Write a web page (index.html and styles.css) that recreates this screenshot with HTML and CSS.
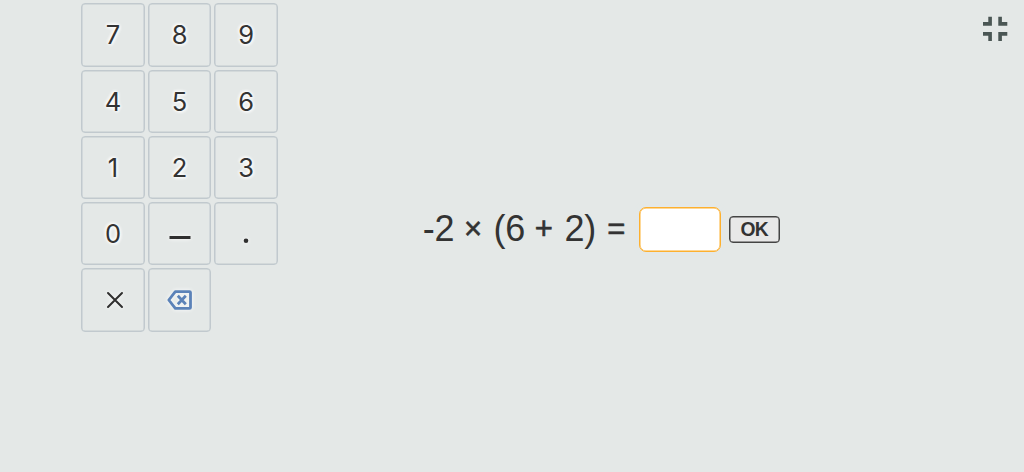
FILE: index.html
```html
<!DOCTYPE html>
<html lang="en">
<head>
    <title>Arithmetic</title>
    <meta charset="utf-8">
    <link rel="stylesheet" href="styles.css">
</head>
<body>
    <div class="page">
        <div class="keypad">
            <button class="key">7</button>
            <button class="key">8</button>
            <button class="key">9</button>
            <button class="key">4</button>
            <button class="key">5</button>
            <button class="key">6</button>
            <button class="key">1</button>
            <button class="key">2</button>
            <button class="key">3</button>
            <button class="key">0</button>
            <button class="key" aria-label="Minus">
                <svg class="minus" viewBox="0 0 22 22"><path d="M.5 14.5h21"/></svg>
            </button>
            <button class="key" aria-label="Decimal point">
                <svg class="dot" viewBox="0 0 22 22"><circle cx="11" cy="17.7" r="2.3"/></svg>
            </button>
            <button class="key" aria-label="Times">
                <svg class="times" viewBox="0 0 18 18"><path d="M2 2l14 14M16 2L2 16"/></svg>
            </button>
            <button class="key" aria-label="Delete">
                <svg class="erase" viewBox="0 0 26 20"><path d="M8.3 1.6h14.2q1 0 1 1v14.8q0 1-1 1H8.3L1.8 10z"/><path d="M10.8 5.8l8 8.4M18.8 5.8l-8 8.4"/></svg>
            </button>
        </div>

        <div class="question">
            <span class="equation">-2 <span class="operator">×</span> (6 <span class="operator">+</span> 2) <span class="operator equals">=</span></span>
            <input class="answer" type="text" aria-label="Answer">
            <button class="ok-button">OK</button>
        </div>

        <button class="fullscreen-button" aria-label="Exit full screen">
            <svg viewBox="0 0 26 26"><path d="M1 7.9h7.1V.8M18.1.8v7.1h7.2M1 17.9h7.1V25M18.1 25v-7.1h7.2"/></svg>
        </button>
    </div>
</body>
</html>
```

FILE: styles.css
```css
html, body {
    height: 100%;
    margin: 0;
    padding: 0;
    overflow: hidden;
}

body {
    background: #e4e8e7;
    color: #333;
    font-family: "Liberation Sans", Arial, sans-serif;
}

button, input {
    box-sizing: border-box;
    margin: 0;
    padding: 0;
    color: inherit;
    font-family: inherit;
}

.page {
    display: flex;
    align-items: flex-start;
    height: 100%;
}

.keypad {
    display: grid;
    grid-template-columns: repeat(3, 63.5px);
    grid-auto-rows: 63.3px;
    gap: 3px;
    margin: 3.3px 0 0 81.3px;
}

.key {
    display: flex;
    align-items: center;
    justify-content: center;
    border: 1px solid #c1c9ce;
    border-radius: 4px;
    background: #e4e8e7;
    box-shadow: inset 0 0 0 .5px #c1c9ce;
    font-family: Inter, sans-serif;
    font-size: 25.5px;
    text-shadow: 1px 1px 3px #fff, -1px -1px 3px #fff, 0 0 4px #fff;
}

.key svg {
    fill: none;
    stroke: #2f2f2f;
    filter: drop-shadow(0 0 2px #fff);
}

.key .minus {
    width: 22px;
    height: 22px;
    stroke-width: 3;
}

.key .dot {
    width: 22px;
    height: 22px;
    fill: #2f2f2f;
    stroke: none;
}

.key .times {
    width: 18px;
    height: 18px;
    margin-left: 3px;
    stroke-width: 2;
    stroke-linecap: round;
}

.key .erase {
    width: 26px;
    height: 20px;
    margin-left: 1px;
    stroke: #5b82b8;
    stroke-width: 2.8;
    stroke-linejoin: round;
}

.question {
    display: flex;
    align-items: center;
    height: 44px;
    margin: 207px 0 0 145px;
}

.equation {
    width: 216px;
    font-size: 36px;
    line-height: 44px;
    letter-spacing: -.3px;
    white-space: pre;
}

.operator {
    -webkit-text-stroke: .6px #333;
    display: inline-block;
    width: 20px;
    font-size: 31px;
    line-height: 1;
    vertical-align: 2px;
}

.equals {
    margin-left: 1.6px;
}

.answer {
    width: 82px;
    height: 45px;
    border: 1px solid #fdb02f;
    border-radius: 7px;
    outline: none;
    background: #fff;
    font-size: 32px;
    text-align: center;
    box-shadow: inset 0 0 0 .5px #fdb02f, 0 0 7px #e2e8ea;
}

.ok-button {
    width: 51px;
    height: 27px;
    margin-left: 8px;
    padding-top: 1px;
    border: 1px solid #444;
    border-radius: 4px;
    background: #e8e8e8;
    box-shadow: inset 0 0 0 .5px #444;
    font-size: 19.3px;
    font-weight: bold;
    letter-spacing: -.7px;
}

.fullscreen-button {
    width: 26px;
    height: 26px;
    margin: 16px 16px 0 auto;
    border: none;
    background: none;
}

.fullscreen-button svg {
    display: block;
    fill: none;
    stroke: #4a5654;
    stroke-width: 3.6;
}
```
